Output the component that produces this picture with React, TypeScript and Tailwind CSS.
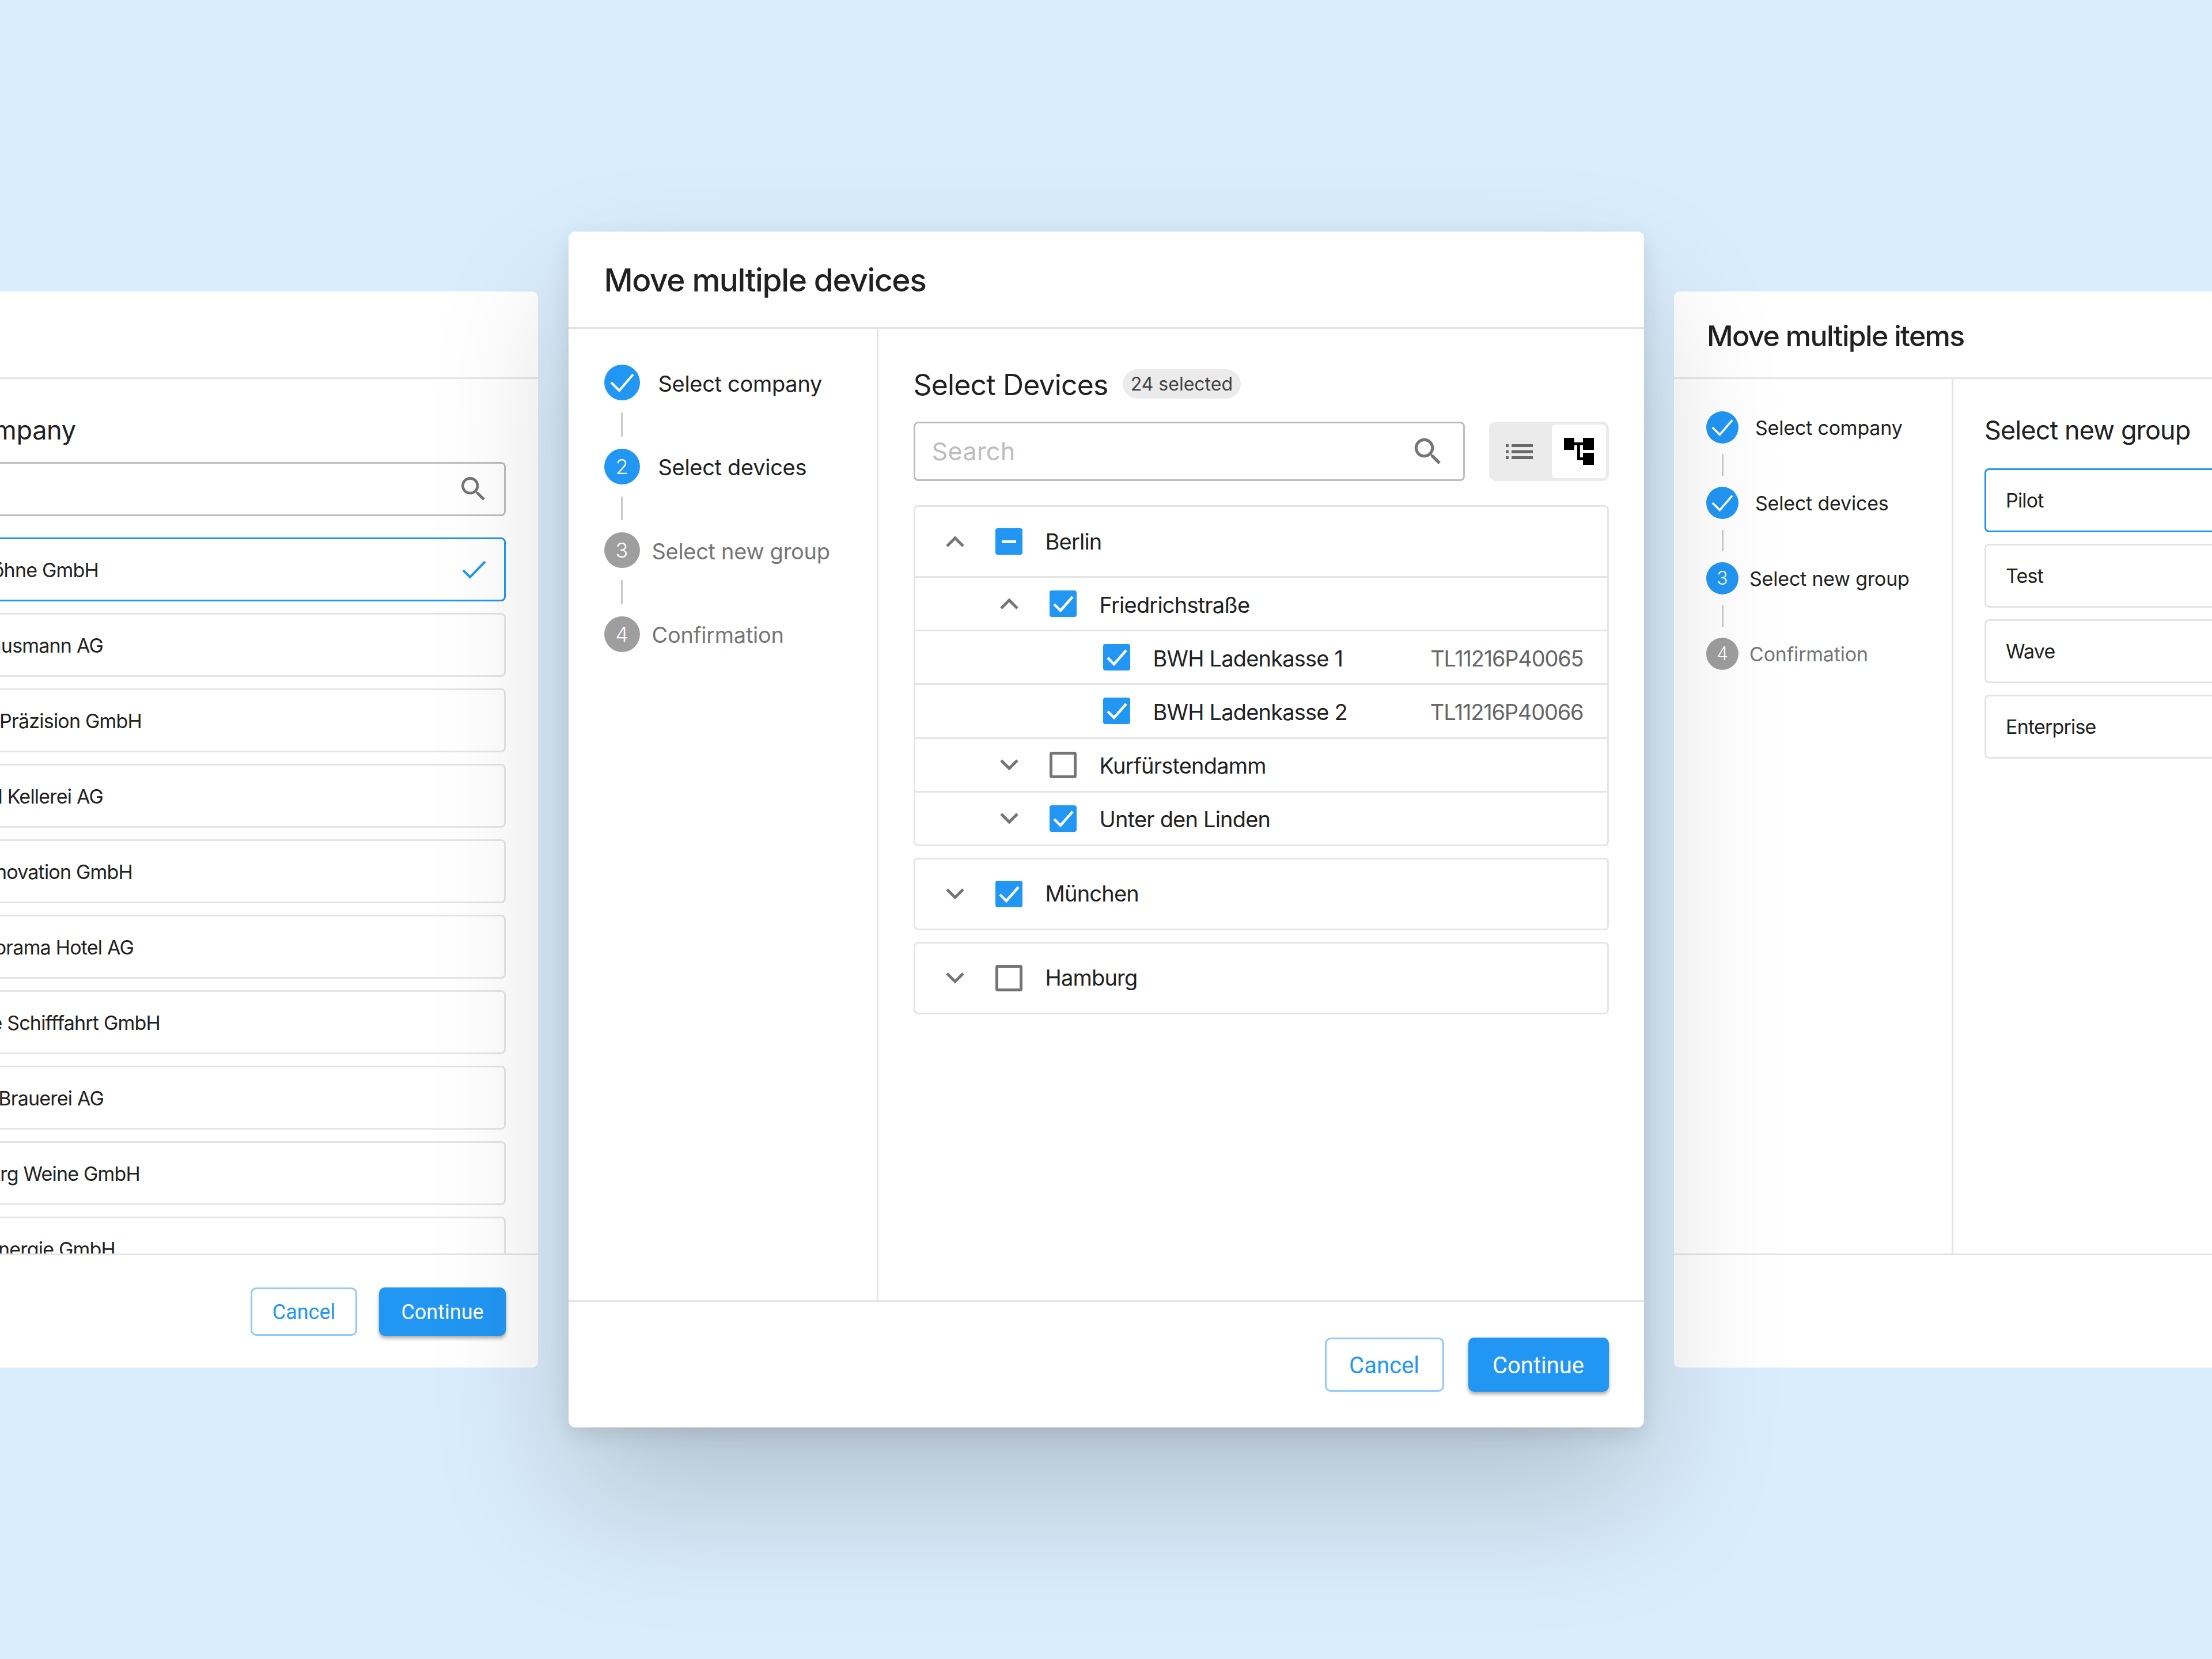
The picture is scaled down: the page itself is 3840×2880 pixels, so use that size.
import clsx from "clsx"

const SEARCH_PATH =
  "M15.5 14h-.79l-.28-.27A6.471 6.471 0 0 0 16 9.5 6.5 6.5 0 1 0 9.5 16c1.61 0 3.09-.59 4.23-1.57l.27.28v.79l5 4.99L20.49 19l-4.99-5zm-6 0C7.01 14 5 11.99 5 9.5S7.01 5 9.5 5 14 7.01 14 9.5 11.99 14 9.5 14z"

const companies = [
  { name: "Müller & Söhne GmbH", w: "w-[340px]" },
  { name: "Gebr. Hausmann AG", w: "w-[348px]" },
  { name: "Schmidt Präzision GmbH", w: "w-[415px]" },
  { name: "Rheintal Kellerei AG", w: "w-[348px]" },
  { name: "Technik Innovation GmbH", w: "w-[399px]" },
  { name: "Alpen Panorama Hotel AG", w: "w-[401px]" },
  { name: "Bodensee Schifffahrt GmbH", w: "w-[447px]" },
  { name: "Bergquell Brauerei AG", w: "w-[349px]" },
  { name: "Rothenburg Weine GmbH", w: "w-[412px]" },
  { name: "Solar Energie GmbH", w: "w-[369px]" },
]

const SearchIcon = ({ className }: { className: string }) => (
  <svg viewBox="0 0 24 24" className={className} fill="#757575">
    <path d={SEARCH_PATH} />
  </svg>
)

const Chevron = ({ up }: { up?: boolean }) => (
  <svg viewBox="0 0 34 22" className="w-[34px] h-[22px] flex-none">
    <polyline
      points={up ? "3,19 17,5 31,19" : "3,3 17,17 31,3"}
      fill="none"
      stroke="#757575"
      strokeWidth="5"
    />
  </svg>
)

const Checkbox = ({ state }: { state: "on" | "off" | "some" }) => {
  if (state === "off") {
    return <div className="w-[47px] h-[46px] flex-none rounded-[4px] border-[5px] border-[#757575]" />
  }
  return (
    <div className="w-[47px] h-[46px] flex-none rounded-[4px] bg-[#2196f3] flex items-center justify-center">
      {state === "some" ? (
        <div className="w-[25px] h-[5px] bg-white" />
      ) : (
        <svg viewBox="0 0 47 46" className="w-[47px] h-[46px]">
          <polyline points="8,24 19,35 40,11" fill="none" stroke="white" strokeWidth="4.5" />
        </svg>
      )}
    </div>
  )
}

const Step = ({
  n,
  label,
  state,
  large,
  last,
}: {
  n: number
  label: string
  state: "done" | "active" | "todo"
  large?: boolean
  last?: boolean
}) => (
  <div>
    <div className={clsx("flex items-center", state === "todo" || (!large && state === "active") ? (large ? "gap-[21px]" : "gap-[19px]") : large ? "gap-[32px]" : "gap-[29px]")}>
      <div
        className={clsx(
          "flex-none rounded-full flex items-center justify-center text-white font-light",
          large ? "w-[62px] h-[62px] text-[36px]" : "w-[56px] h-[56px] text-[32px]",
          state === "todo" ? "bg-[#9e9e9e]" : "bg-[#2196f3]",
        )}
      >
        {state === "done" ? (
          <svg viewBox="0 0 62 62" className="w-full h-full">
            <polyline points="12,31 26,45 50,17" fill="none" stroke="white" strokeWidth="4" />
          </svg>
        ) : (
          n
        )}
      </div>
      <span
        className={clsx(
          "whitespace-nowrap",
          large ? "text-[38px] tracking-[-0.3px] pt-[4px]" : "text-[34px] tracking-[-0.2px]",
          state === "todo" ? "text-[#757575]" : "text-[#212121]",
        )}
      >
        {label}
      </span>
    </div>
    {!last && (
      <div
        className={clsx(
          "w-[3px] bg-[#c8c8c8]",
          large ? "h-[41.5px] my-[21px] ml-[29.5px]" : "h-[37px] my-[19px] ml-[26.5px]",
        )}
      />
    )}
  </div>
)

const TreeRow = ({
  level,
  open,
  check,
  label,
  serial,
  top,
}: {
  level: number
  open?: boolean
  check: "on" | "off" | "some"
  label: string
  serial?: string
  top?: boolean
}) => (
  <div
    className={clsx(
      "flex items-center text-[38px] tracking-[-0.8px] text-[#212121]",
      top ? "h-[120px]" : "h-[93.2px] border-t-[3px] border-[#e5e5e5]",
      level === 0 && "pl-[52px]",
      level === 1 && "pl-[146px]",
      level === 2 && "pl-[326px]",
    )}
  >
    {level < 2 && (
      <div className="mr-[53px] flex-none">
        <Chevron up={open} />
      </div>
    )}
    <Checkbox state={check} />
    <span className={clsx("ml-[40px] whitespace-nowrap", !top && "pt-[4px]")}>{label}</span>
    {serial && <span className="ml-auto mr-[41px] pt-[4px] tracking-[-1.2px] text-[#666666]">{serial}</span>}
  </div>
)

const Cancel = ({ className }: { className: string }) => (
  <button className={clsx("rounded-[10px] border-[3px] border-[#90caf9] text-[#2196f3] bg-white pt-[3px] font-['Roboto',sans-serif]", className)}>
    Cancel
  </button>
)

const Continue = ({ className }: { className: string }) => (
  <button className={clsx("rounded-[10px] bg-[#2196f3] text-white pt-[3px] shadow-[0_4px_6px_rgba(0,0,0,0.35)] font-['Roboto',sans-serif]", className)}>
    Continue
  </button>
)

const LeftPanel = () => (
  <div className="w-[1680px] h-[1868px] ml-[-746px] flex-none flex flex-col bg-white rounded-[10px] overflow-hidden">
    <div className="h-[152px] flex-none flex items-center pl-[57px] pt-[5px] border-b-[3px] border-[#e5e5e5] text-[50px] font-medium tracking-[-1.7px] text-[#212121]">
      Move multiple devices
    </div>
    <div className="flex-1 min-h-0 flex">
      <div className="w-[483px] flex-none border-r-[3px] border-[#e5e5e5] pt-[56px] pl-[56px]">
        <Step n={1} label="Select company" state="active" />
        <Step n={2} label="Select devices" state="todo" />
        <Step n={3} label="Select new group" state="todo" />
        <Step n={4} label="Confirmation" state="todo" last />
      </div>
      <div className="flex-1 min-w-0 pl-[57px] pr-[56px] pt-[62px] overflow-hidden">
        <div className="text-[45px] leading-[54px] tracking-[-0.3px] text-[#212121]">Select company</div>
        <div className="mt-[28px] h-[94px] rounded-[8px] border-[3px] border-[#bdbdbd] flex items-center justify-end pr-[25px]">
          <SearchIcon className="w-[56px] h-[56px]" />
        </div>
        <div className="mt-[37px] flex flex-col gap-[20.5px]">
          {companies.map((c, i) => (
            <div
              key={c.name}
              className={clsx(
                "h-[110.5px] flex-none rounded-[8px] border-[3px] flex items-center pl-[34px] pr-[31px] text-[34px] tracking-[-0.8px] text-[#212121]",
                i === 0 ? "border-[#2196f3]" : "border-[#e5e5e5]",
              )}
            >
              <div className={clsx("flex justify-end whitespace-nowrap pt-[2px]", c.w)}>{c.name}</div>
              {i === 0 && (
                <svg viewBox="0 0 42 32" className="w-[42px] h-[32px] ml-auto mt-[2px]">
                  <polyline points="2,17 14,29 40,2" fill="none" stroke="#2196f3" strokeWidth="4" />
                </svg>
              )}
            </div>
          ))}
        </div>
      </div>
    </div>
    <div className="h-[198px] flex-none border-t-[3px] border-[#e5e5e5] flex items-center justify-end gap-[38px] pr-[56px]">
      <Cancel className="w-[185px] h-[84px] text-[36px]" />
      <Continue className="w-[220px] h-[84px] text-[36px]" />
    </div>
  </div>
)

const CenterPanel = () => (
  <div className="relative z-10 w-[1867px] h-[2076px] flex-none flex flex-col bg-white rounded-[12px] shadow-[0_14px_36px_rgba(0,0,0,0.1),0_120px_240px_rgba(0,0,0,0.18)]">
    <div className="h-[169px] flex-none flex items-center pl-[62px] pt-[3px] border-b-[3px] border-[#e5e5e5] text-[55px] font-medium tracking-[-1.4px] text-[#212121]">
      Move multiple devices
    </div>
    <div className="flex-1 min-h-0 flex">
      <div className="w-[538px] flex-none border-r-[3px] border-[#e5e5e5] pt-[62px] pl-[62px]">
        <Step large n={1} label="Select company" state="done" />
        <Step large n={2} label="Select devices" state="active" />
        <Step large n={3} label="Select new group" state="todo" />
        <Step large n={4} label="Confirmation" state="todo" last />
      </div>
      <div className="flex-1 min-w-0 pl-[61px] pr-[61px] pt-[70px]">
        <div className="h-[51px] flex items-center gap-[25px]">
          <span className="text-[50px] tracking-[-0.85px] pt-[3px] text-[#212121] whitespace-nowrap">Select Devices</span>
          <span className="h-[51px] px-[14px] rounded-full bg-[#ebebeb] flex items-center text-[32px] tracking-[0px] text-[#424242] whitespace-nowrap">
            24 selected
          </span>
        </div>
        <div className="mt-[40px] flex gap-[42px]">
          <div className="flex-1 h-[103px] rounded-[8px] border-[3px] border-[#bdbdbd] flex items-center pl-[29px] pr-[30px]">
            <span className="text-[43px] tracking-[0.4px] text-[#bdbdbd]">Search</span>
            <SearchIcon className="w-[62px] h-[62px] ml-auto" />
          </div>
          <div className="w-[208px] h-[103px] flex-none rounded-[12px] bg-[#ebebeb] p-[5px] flex">
            <div className="flex-1 flex items-center justify-center pr-[9px]">
              <svg viewBox="0 0 47 26" className="w-[47px] h-[26px]" fill="#696969">
                <rect x="0" y="0" width="5" height="5" />
                <rect x="0" y="10.5" width="5" height="5" />
                <rect x="0" y="21" width="5" height="5" />
                <rect x="10" y="0" width="37" height="5" />
                <rect x="10" y="10.5" width="37" height="5" />
                <rect x="10" y="21" width="37" height="5" />
              </svg>
            </div>
            <div className="w-[94px] flex-none rounded-[6px] bg-white flex items-center justify-center">
              <svg viewBox="0 0 52 47" className="w-[52px] h-[47px]" fill="black">
                <rect x="0" y="0" width="18" height="21" />
                <rect x="33" y="0" width="19" height="21" />
                <rect x="33" y="26" width="19" height="21" />
                <rect x="18" y="8" width="15" height="5" />
                <rect x="23" y="8" width="5" height="31" />
                <rect x="23" y="34" width="10" height="5" />
              </svg>
            </div>
          </div>
        </div>
        <div className="mt-[42px] flex flex-col gap-[20px]">
          <div className="rounded-[8px] border-[3px] border-[#e5e5e5]">
            <TreeRow top level={0} open check="some" label="Berlin" />
            <TreeRow level={1} open check="on" label="Friedrichstraße" />
            <TreeRow level={2} check="on" label="BWH Ladenkasse 1" serial="TL11216P40065" />
            <TreeRow level={2} check="on" label="BWH Ladenkasse 2" serial="TL11216P40066" />
            <TreeRow level={1} check="off" label="Kurfürstendamm" />
            <TreeRow level={1} check="on" label="Unter den Linden" />
          </div>
          <div className="rounded-[8px] border-[3px] border-[#e5e5e5]">
            <TreeRow top level={0} check="on" label="München" />
          </div>
          <div className="rounded-[8px] border-[3px] border-[#e5e5e5]">
            <TreeRow top level={0} check="off" label="Hamburg" />
          </div>
        </div>
      </div>
    </div>
    <div className="h-[221px] flex-none border-t-[3px] border-[#e5e5e5] flex items-center justify-end gap-[42px] pr-[61px]">
      <Cancel className="w-[207px] h-[94px] text-[40px]" />
      <Continue className="w-[244px] h-[94px] text-[40px]" />
    </div>
  </div>
)

const RightPanel = () => (
  <div className="w-[1680px] h-[1868px] flex-none flex flex-col bg-white rounded-[10px] overflow-hidden">
    <div className="h-[152px] flex-none flex items-center pl-[57px] pt-[5px] border-b-[3px] border-[#e5e5e5] text-[50px] font-medium tracking-[-1.7px] text-[#212121]">
      Move multiple items
    </div>
    <div className="flex-1 min-h-0 flex">
      <div className="w-[485px] flex-none border-r-[3px] border-[#e5e5e5] pt-[56px] pl-[56px]">
        <Step n={1} label="Select company" state="done" />
        <Step n={2} label="Select devices" state="done" />
        <Step n={3} label="Select new group" state="active" />
        <Step n={4} label="Confirmation" state="todo" last />
      </div>
      <div className="flex-1 min-w-0 pl-[54px] pr-[56px] pt-[62px]">
        <div className="text-[45px] leading-[54px] tracking-[-0.9px] text-[#212121]">Select new group</div>
        <div className="mt-[39px] flex flex-col gap-[20.5px]">
          {["Pilot", "Test", "Wave", "Enterprise"].map((g, i) => (
            <div
              key={g}
              className={clsx(
                "h-[110.5px] rounded-[8px] border-[3px] flex items-center pl-[34px] text-[34px] tracking-[-0.8px] text-[#212121]",
                i === 0 ? "border-[#2196f3]" : "border-[#e5e5e5]",
              )}
            >
              {g}
            </div>
          ))}
        </div>
      </div>
    </div>
    <div className="h-[198px] flex-none border-t-[3px] border-[#e5e5e5] flex items-center justify-end gap-[38px] pr-[56px]">
      <Cancel className="w-[185px] h-[84px] text-[36px]" />
      <Continue className="w-[220px] h-[84px] text-[36px]" />
    </div>
  </div>
)

const App = () => (
  <div className="w-[3840px] h-[2880px] overflow-hidden bg-[#daedfc] flex items-center gap-[52.5px] font-['Inter',sans-serif]">
    <LeftPanel />
    <CenterPanel />
    <RightPanel />
  </div>
)

export default App
